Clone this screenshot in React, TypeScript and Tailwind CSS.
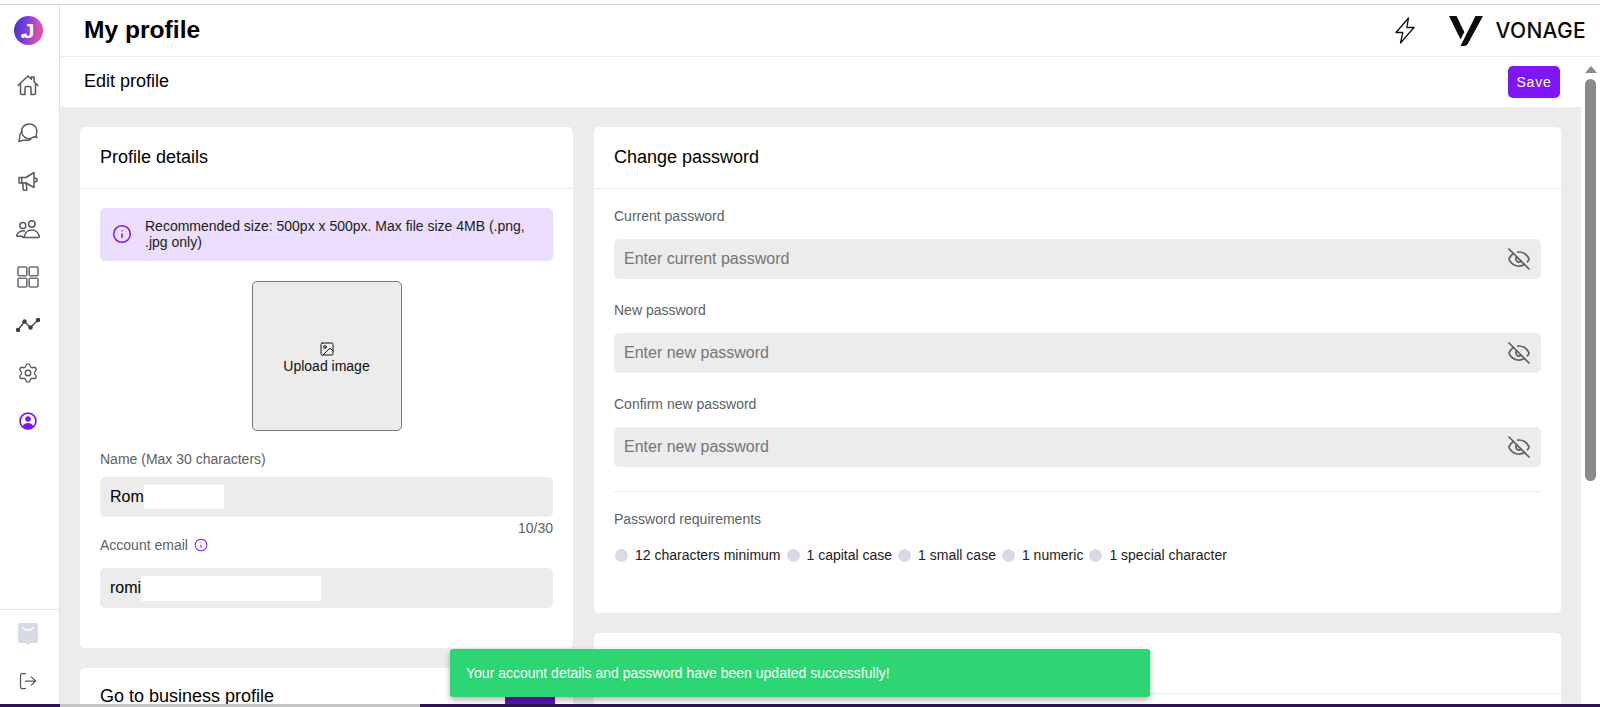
import React from "react";
import { Settings, LogOut, Info, Image as ImageIcon, EyeOff, ArrowUpRight } from "lucide-react";

const stroke = "#55585f";

function HomeIcon() {
  return (
    <svg width="22" height="22" viewBox="0 0 22 22" fill="none" stroke={stroke} strokeWidth="1.500" strokeLinejoin="round" strokeLinecap="round">
      <path d="M1 11.500 11 2l3.500 3.300V3h2.600v4.800L21 11.500" />
      <path d="M3.500 9.800V19a1.500 1.500 0 0 0 1.500 1.500h3V14a1.500 1.500 0 0 1 1.500-1.500h3A1.500 1.500 0 0 1 14 14v6.500h3a1.500 1.500 0 0 0 1.500-1.500V9.800" />
    </svg>
  );
}

function ChatIcon() {
  return (
    <svg width="20" height="20" viewBox="0 0 20 20" fill="none" stroke={stroke} strokeWidth="1.400" strokeLinejoin="round" strokeLinecap="round">
      <path d="M11.500 1a7.300 7.300 0 0 1 6.600 10.500l.7 3-3-.8A7.300 7.300 0 1 1 11.500 1Z" />
      <path d="M4.400 8.300A6.300 6.300 0 0 0 1.800 13.500l-.8 5 4.400-1.300h5.600l2.300-1.500" />
    </svg>
  );
}

function MegaphoneIcon() {
  return (
    <svg width="20" height="21" viewBox="0 0 20 21" fill="none" stroke={stroke} strokeWidth="1.500" strokeLinejoin="round" strokeLinecap="round">
      <path d="M1 6.500h7L16 1.500v15l-8-4.500H1Z" />
      <path d="M3.800 6.500v5.500" />
      <path d="M5 12v6a1.300 1.300 0 0 0 1.300 1.300h1.300a1.200 1.200 0 0 0 1.200-1.300L8.200 12" />
      <path d="M17 7l2 1v2l-2 1" />
    </svg>
  );
}

function UsersIcon() {
  return (
    <svg width="24" height="19" viewBox="0 0 24 19" fill="none" stroke={stroke} strokeWidth="1.500" strokeLinejoin="round" strokeLinecap="round">
      <circle cx="6.800" cy="5.500" r="3" />
      <circle cx="15.800" cy="4" r="3.200" />
      <path d="M7 17.500h15.500c.7 0 1-.5.8-1.200C22.500 12.800 19.500 10 15.800 10s-6.700 2.800-7.500 6.300c-.2.700.2 1.200.8 1.200" />
      <path d="M8.500 11a6.500 6.500 0 0 0-7.700 4.200c-.2.600.2 1 .8 1h5" />
    </svg>
  );
}

function GridIcon() {
  return (
    <svg width="22" height="22" viewBox="0 0 22 22" fill="none" stroke="#6d7076" strokeWidth="1.600">
      <rect x="1" y="1" width="8.800" height="8.800" rx="1" />
      <rect x="12.200" y="1" width="8.800" height="8.800" rx="1" />
      <rect x="1" y="12.200" width="8.800" height="8.800" rx="1" />
      <rect x="12.200" y="12.200" width="8.800" height="8.800" rx="1" />
    </svg>
  );
}

function TrendIcon() {
  return (
    <svg width="24" height="14" viewBox="0 0 24 14" fill="none" stroke="#3d4046" strokeWidth="1.300">
      <path d="M2 12 8.500 3.500l6 6L22 2" />
      <circle cx="2" cy="12" r="1.600" fill="#3d4046" />
      <circle cx="8.500" cy="3.500" r="1.600" fill="#3d4046" />
      <circle cx="14.500" cy="9.500" r="1.600" fill="#3d4046" />
      <circle cx="22" cy="2" r="1.600" fill="#3d4046" />
    </svg>
  );
}

function ProfileIcon() {
  return (
    <svg width="18" height="18" viewBox="0 0 18 18">
      <circle cx="9" cy="9" r="7.900" fill="none" stroke="#7f16f5" strokeWidth="1.700" />
      <circle cx="9" cy="7" r="2.800" fill="#7f16f5" />
      <path d="M3.600 14.600C4.600 12 6.600 11 9 11s4.400 1 5.400 3.600A7.500 7.500 0 0 1 9 17a7.500 7.500 0 0 1-5.400-2.400Z" fill="#7f16f5" />
    </svg>
  );
}

function MailIcon() {
  return (
    <svg width="20" height="22" viewBox="0 0 20 22">
      <path d="M1.500 0h17A1.500 1.500 0 0 1 20 1.500v17a1.500 1.500 0 0 1-1.500 1.500h-6L10 22l-2.500-2h-6A1.500 1.500 0 0 1 0 18.500v-17A1.500 1.500 0 0 1 1.500 0Z" fill="#d8dbe3" />
      <path d="M5 4.500c1.500 3.500 8.500 3.500 10 0" fill="none" stroke="#fff" strokeWidth="1.500" strokeLinecap="round" />
    </svg>
  );
}

function BoltIcon() {
  return (
    <svg width="20" height="27" viewBox="0 0 20 27" fill="none" stroke="#111" strokeWidth="1.300" strokeLinejoin="round">
      <path d="M13.500 1 1 15.500h6.800L5.500 26 19 10.500h-7.200Z" />
    </svg>
  );
}

function Logo() {
  return (
    <div className="relative flex h-[29px] w-[29px] items-center justify-center rounded-full bg-[linear-gradient(100deg,#3a33cc_0%,#7a3fe0_40%,#d84fb0_80%,#f5505f_100%)]">
      <span className="text-[21px] font-bold leading-none text-white">J</span>
      <span className="absolute bottom-[7px] left-[7px] h-[4px] w-[4px] rounded-full bg-white" />
    </div>
  );
}

function VonageMark() {
  return (
    <svg width="34" height="30" viewBox="0 0 34 30" fill="#0b0b0b">
      <path d="M0 0h7.500l7.800 16-3.700 7.500Z" />
      <path d="M26.500 0H34L19 27.500c-1 1.700-2.200 2.500-4 2.500H11.500Z" />
    </svg>
  );
}

function PasswordField({ label, placeholder, className }: { label: string; placeholder: string; className: string }) {
  return (
    <div className={className}>
      <div className="h-[16px] text-[14px] leading-[16px] text-[#5d5f66]">{label}</div>
      <div className="mt-[15px] flex h-[40px] items-center justify-between rounded-[5px] bg-[#ececec] pl-[10px] pr-[10px]">
        <span className="text-[16px] text-[#757575]">{placeholder}</span>
        <EyeOff size={24} strokeWidth={1.700} className="text-[#5f6166]" />
      </div>
    </div>
  );
}

function Requirement({ text }: { text: string }) {
  return (
    <div className="flex items-center gap-[7px]">
      <span className="h-[13px] w-[13px] rounded-full bg-[#d8dbe5]" />
      <span className="text-[14px] text-[#1b1b1b]">{text}</span>
    </div>
  );
}

export default function App() {
  const navClass = "flex h-[48px] items-center justify-center text-[#55585f]";
  return (
    <div className="relative flex h-[707px] w-full flex-col overflow-hidden bg-white font-['Liberation_Sans',Arial,sans-serif] text-black">
      <div className="h-[5px] shrink-0 border-b border-[#d4d4d4] bg-white" />

      <div className="flex min-h-0 flex-1">
        <aside className="flex w-[60px] shrink-0 flex-col border-r border-[#dfdfdf] bg-white">
          <div className="flex justify-center pr-[2px] pt-[11px]"><Logo /></div>
          <nav className="mt-[16px] flex flex-col pr-[3px]">
            <div className={navClass}><HomeIcon /></div>
            <div className={navClass}><ChatIcon /></div>
            <div className={navClass}><MegaphoneIcon /></div>
            <div className={navClass}><UsersIcon /></div>
            <div className={navClass}><GridIcon /></div>
            <div className={navClass}><TrendIcon /></div>
            <div className={navClass}><Settings size={22} strokeWidth={1.500} /></div>
            <div className={navClass}><ProfileIcon /></div>
          </nav>
          <div className="mt-auto flex h-[95px] flex-col items-center border-t border-[#e8e8e8] pr-[3px] pt-[13px]">
            <MailIcon />
            <LogOut size={20} strokeWidth={1.500} className="mt-[26px] text-[#55585f]" />
          </div>
        </aside>

        <div className="flex min-w-0 flex-1 flex-col">
          <header className="flex h-[52px] shrink-0 items-center justify-between border-b border-[#ececec] pl-[24px] pr-[14px]">
            <h1 className="text-[24.600px] font-bold leading-none">My profile</h1>
            <div className="flex items-center">
              <BoltIcon />
              <span className="ml-[34px]"><VonageMark /></span>
              <span className="ml-[13px] font-['Inter',sans-serif] text-[21px] font-medium leading-none tracking-[0.3px] text-[#0b0b0b]">VONAGE</span>
            </div>
          </header>

          <div className="flex min-h-0 flex-1">
            <main className="flex min-w-0 flex-1 flex-col overflow-hidden">
              <div className="flex h-[50px] shrink-0 items-center justify-between bg-white pb-[2px] pl-[24px] pr-[21px]">
                <span className="text-[18px]">Edit profile</span>
                <button className="mt-[2px] h-[32px] w-[52px] rounded-[5px] bg-[#7f16f5] text-[14px] tracking-[0.8px] text-white">Save</button>
              </div>

              <div className="flex flex-1 items-start gap-[21px] bg-[#ececec] px-[20px] pt-[20px]">
                <div className="flex w-[493px] shrink-0 flex-col gap-[20px]">
                  <section className="h-[521px] rounded-[5px] bg-white">
                    <div className="flex h-[62px] items-center border-b border-[#ececec] px-[20px] text-[18px]">Profile details</div>
                    <div className="px-[20px] pt-[19px]">
                      <div className="flex h-[53px] items-center rounded-[5px] bg-[#ecdeff] pb-[1px] pl-[12px] pr-[20px]">
                        <Info size={20} strokeWidth={1.800} className="shrink-0 text-[#7f16f5]" />
                        <p className="ml-[13px] text-[14px] leading-[16px] text-[#1b1b1b]">Recommended size: 500px x 500px. Max file size 4MB (.png, .jpg only)</p>
                      </div>
                      <div className="mx-auto mt-[20px] flex h-[150px] w-[150px] flex-col items-center justify-center rounded-[5px] border border-[#77777d] bg-[#ececec]">
                        <ImageIcon size={16} strokeWidth={1.500} className="mt-[3px] text-[#111]" />
                        <span className="mt-[1px] text-[14px] leading-[17px] text-[#111]">Upload image</span>
                      </div>
                      <div className="mt-[20px] h-[16px] text-[14px] leading-[16px] text-[#5d5f66]">Name (Max 30 characters)</div>
                      <div className="mt-[10px] flex h-[40px] items-center rounded-[5px] bg-[#ececec] pl-[10px]">
                        <span className="text-[16px]">Rom</span>
                        <span className="h-[24px] w-[80px] bg-white" />
                      </div>
                      <div className="h-[20px] pt-[3px] text-right text-[14px] leading-[16px] text-[#5d5f66]">10/30</div>
                      <div className="flex h-[16px] items-center gap-[6px] text-[14px] leading-[16px] text-[#5d5f66]">
                        Account email
                        <Info size={14} strokeWidth={1.800} className="text-[#7f16f5]" />
                      </div>
                      <div className="mt-[15px] flex h-[40px] items-center rounded-[5px] bg-[#ececec] pl-[10px]">
                        <span className="text-[16px]">romi</span>
                        <span className="h-[25px] w-[180px] bg-white" />
                      </div>
                    </div>
                  </section>
                  <section className="relative h-[100px] rounded-[5px] bg-white">
                    <div className="flex h-[57px] items-center justify-between pl-[20px] pr-[18px] text-[18px]">
                      Go to business profile
                      <span className="mt-[25px] flex h-[36px] w-[50px] items-start justify-center rounded-[4px] bg-[#5b13b8] pt-[10px] text-white"><ArrowUpRight size={18} /></span>
                    </div>
                  </section>
                </div>

                <div className="flex min-w-0 flex-1 flex-col gap-[20px]">
                  <section className="h-[486px] rounded-[5px] bg-white">
                    <div className="flex h-[62px] items-center border-b border-[#ececec] px-[20px] text-[18px]">Change password</div>
                    <div className="px-[20px]">
                      <PasswordField className="pt-[19px]" label="Current password" placeholder="Enter current password" />
                      <PasswordField className="pt-[23px]" label="New password" placeholder="Enter new password" />
                      <PasswordField className="pt-[23px]" label="Confirm new password" placeholder="Enter new password" />
                      <div className="mt-[24px] border-t border-[#ececec] pt-[19px] text-[14px] leading-[16px] text-[#5d5f66]">Password requirements</div>
                      <div className="mt-[18px] flex items-center gap-[6px] pl-[1px]">
                        <Requirement text="12 characters minimum" />
                        <Requirement text="1 capital case" />
                        <Requirement text="1 small case" />
                        <Requirement text="1 numeric" />
                        <Requirement text="1 special character" />
                      </div>
                    </div>
                  </section>
                  <section className="h-[100px] rounded-[5px] bg-white">
                    <div className="h-[61px] border-b border-[#ececec]" />
                  </section>
                </div>
              </div>
            </main>

            <div className="flex w-[19px] shrink-0 flex-col items-center bg-white pt-[9px]">
              <span className="h-0 w-0 border-x-[6.500px] border-b-[7px] border-x-transparent border-b-[#8a8a8a]" />
              <span className="mt-[6px] h-[402px] w-[11px] rounded-[6px] bg-[#8a8a8a]" />
            </div>
          </div>
        </div>
      </div>

      <div className="flex h-[3px] shrink-0">
        <span className="w-[60px] bg-[#2d1450]" />
        <span className="w-[360px] bg-[#c4c4c4]" />
        <span className="flex-1 bg-[#2d1450]" />
      </div>

      <div className="absolute left-[450px] top-[649px] flex h-[48px] w-[700px] items-center rounded-[3px] bg-[#2ed573] pl-[16px] text-[14px] text-white shadow-[0_3px_6px_rgba(0,0,0,0.3)]">
        Your account details and password have been updated successfully!
      </div>
    </div>
  );
}
